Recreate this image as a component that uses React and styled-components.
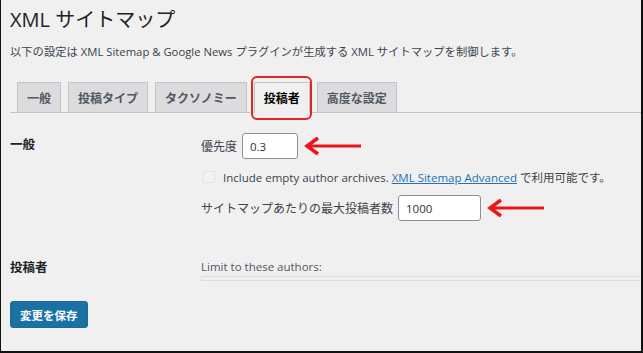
import styled, { createGlobalStyle } from "styled-components";

const GlobalStyle = createGlobalStyle`
  html, body {
    margin: 0;
    padding: 0;
    background: #f0f0f1;
  }
  body {
    font-family: "Open Sans", "Noto Sans CJK JP", sans-serif;
  }
`;

const StyledFrame = styled.div`
  box-sizing: border-box;
  width: 643px;
  height: 353px;
  background: #f0f0f1;
  border-left: 1px solid #111;
  border-right: 2px solid #111;
  border-bottom: 2px solid #111;
  padding: 0 0 0 9px;
  overflow: hidden;
  color: #1d2327;
`;

const StyledTitle = styled.h1`
  margin: 0;
  padding: 7px 0 0;
  font-size: 20px;
  font-weight: 400;
  line-height: 26px;
  color: #1d2327;
`;

const StyledIntro = styled.p`
  margin: 12px 0 0;
  font-size: 11.3px;
  line-height: 14px;
  color: #3c434a;
`;

const StyledTabs = styled.nav`
  display: flex;
  align-items: flex-end;
  gap: 7px;
  margin-top: 23px;
  padding-left: 7px;
  border-bottom: 1px solid #c3c4c7;
`;

const StyledTab = styled.span`
  position: relative;
  box-sizing: border-box;
  height: 31px;
  margin-bottom: -1px;
  padding: 0 9px;
  display: flex;
  align-items: center;
  font-size: 12px;
  font-weight: 600;
  color: ${({ $active }) => ($active ? "#000" : "#50575e")};
  background: ${({ $active }) => ($active ? "#f0f0f1" : "#dcdcde")};
  border: 1px solid #c3c4c7;
  border-bottom-color: ${({ $active }) => ($active ? "#f0f0f1" : "#c3c4c7")};
`;

const StyledHighlight = styled.span`
  position: absolute;
  left: -4px;
  right: -3px;
  top: -7px;
  bottom: -8px;
  border: 2px solid #e0262b;
  border-radius: 6px;
  pointer-events: none;
`;

const StyledForm = styled.div`
  display: grid;
  grid-template-columns: 191px 1fr;
  row-gap: 37px;
  margin-top: 17px;
`;

const StyledLabel = styled.div`
  padding-top: ${({ $top }) => $top || 0}px;
  font-size: 12.5px;
  font-weight: 600;
  line-height: 18px;
  color: #1d2327;
`;

const StyledFields = styled.div`
  display: flex;
  flex-direction: column;
  gap: 10px;
  padding-top: 3px;
`;

const StyledRow = styled.div`
  display: flex;
  align-items: center;
  gap: 5px;
  font-size: 12px;
  color: #3c434a;
  white-space: nowrap;
`;

const StyledNote = styled.div`
  display: flex;
  align-items: center;
  font-size: 11.5px;
  color: #3c434a;
  white-space: pre;
`;

const StyledInput = styled.div`
  box-sizing: border-box;
  width: ${({ $w }) => $w}px;
  height: 26px;
  padding: 0 7px;
  display: flex;
  align-items: center;
  background: #fff;
  border: 1px solid #8c8f94;
  border-radius: 3px;
  font-size: 11.5px;
  color: #2c3338;
`;

const StyledCheckbox = styled.span`
  box-sizing: border-box;
  width: 12px;
  height: 12px;
  margin: 0 8px 0 2px;
  border: 1px solid #e2e3e5;
  border-radius: 2px;
  background: #f3f3f4;
`;

const StyledLink = styled.a`
  color: #2271b1;
  text-decoration: underline;
`;

const StyledAuthors = styled.div`
  display: flex;
  flex-direction: column;
  gap: 1px;
  padding-top: 1px;
  font-size: 11.5px;
  line-height: 16px;
  color: #50575e;
`;

const StyledList = styled.div`
  height: 3px;
  border: 1px solid #dcdcde;
  border-right: none;
`;

const StyledButton = styled.button`
  margin-top: 20px;
  height: 27px;
  padding: 0 9px;
  font-family: "Noto Sans CJK JP", sans-serif;
  font-size: 11.5px;
  font-weight: 700;
  color: #fff;
  background: #1a72a4;
  border: 1px solid #1a6a97;
  border-radius: 3px;
`;

const Arrow = ({ width = 58 }) => (
  <svg width={width} height="22" viewBox={`0 0 ${width} 22`}>
    <line x1="4" y1="11" x2={width} y2="11" stroke="#e8161b" strokeWidth="3" />
    <polyline
      points="15,3 4,11 15,19"
      fill="none"
      stroke="#e8161b"
      strokeWidth="3.5"
      strokeLinejoin="miter"
    />
  </svg>
);

export default function App() {
  return (
    <>
      <GlobalStyle />
      <StyledFrame>
        <StyledTitle>XML サイトマップ</StyledTitle>
        <StyledIntro>
          以下の設定は XML Sitemap &amp; Google News プラグインが生成する XML サイトマップを制御します。
        </StyledIntro>
        <StyledTabs>
          <StyledTab>一般</StyledTab>
          <StyledTab>投稿タイプ</StyledTab>
          <StyledTab>タクソノミー</StyledTab>
          <StyledTab $active>
            投稿者
            <StyledHighlight />
          </StyledTab>
          <StyledTab>高度な設定</StyledTab>
        </StyledTabs>
        <StyledForm>
          <StyledLabel $top={6}>一般</StyledLabel>
          <StyledFields>
            <StyledRow>
              優先度
              <StyledInput $w={56}>0.3</StyledInput>
              <Arrow />
            </StyledRow>
            <StyledNote>
              <StyledCheckbox />
              {"Include empty author archives. "}
              <StyledLink>XML Sitemap Advanced</StyledLink>
              {" で利用可能です。"}
            </StyledNote>
            <StyledRow>
              サイトマップあたりの最大投稿者数
              <StyledInput $w={83}>1000</StyledInput>
              <Arrow />
            </StyledRow>
          </StyledFields>
          <StyledLabel $top={1}>投稿者</StyledLabel>
          <StyledAuthors>
            Limit to these authors:
            <StyledList />
          </StyledAuthors>
        </StyledForm>
        <StyledButton>変更を保存</StyledButton>
      </StyledFrame>
    </>
  );
}
